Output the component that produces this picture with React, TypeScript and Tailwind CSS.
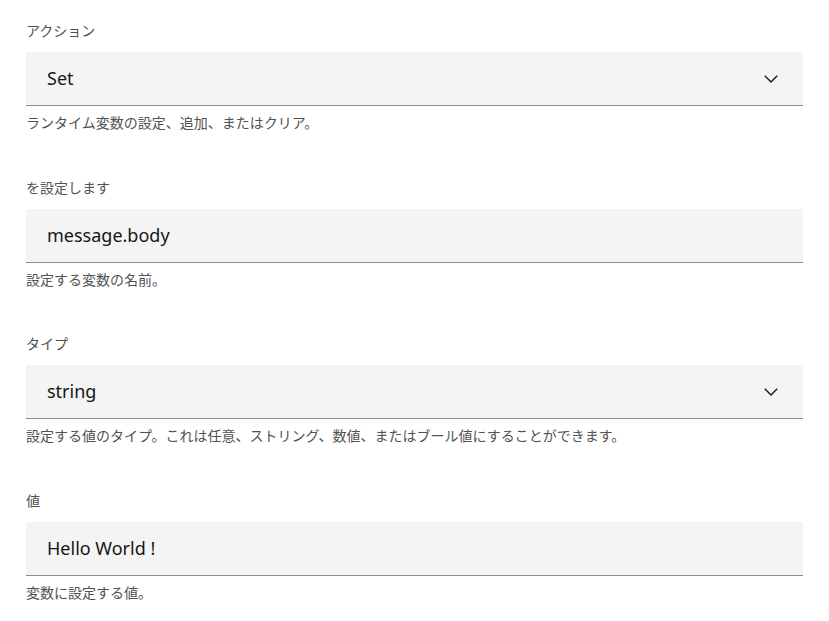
import React from "react";

type Field = {
  label: string;
  value: string;
  helper: string;
  select?: boolean;
};

const fields: Field[] = [
  { label: "アクション", value: "Set", helper: "ランタイム変数の設定、追加、またはクリア。", select: true },
  { label: "を設定します", value: "message.body", helper: "設定する変数の名前。" },
  {
    label: "タイプ",
    value: "string",
    helper: "設定する値のタイプ。これは任意、ストリング、数値、またはブール値にすることができます。",
    select: true,
  },
  { label: "値", value: "Hello World !", helper: "変数に設定する値。" },
];

function Chevron() {
  return (
    <svg width="14" height="8" viewBox="0 0 14 8" fill="none" className="shrink-0">
      <path d="M0.8 0.8 L7 7 L13.2 0.8" stroke="#161616" strokeWidth="1.4" />
    </svg>
  );
}

function FormField({ field }: { field: Field }) {
  return (
    <div className="flex flex-col">
      <label className="text-[14px] leading-[20px] text-[#525252]">{field.label}</label>
      <div className="mt-[11px] h-[54px] bg-[#f4f4f4] border-b border-[#8d8d8d] flex items-center pl-[21px] pr-[25px]">
        <span className="flex-1 text-[18px] text-[#161616]">{field.value}</span>
        {field.select && <Chevron />}
      </div>
      <p className="mt-[7px] text-[14px] leading-[20px] text-[#525252]">{field.helper}</p>
    </div>
  );
}

export default function App() {
  return (
    <div
      className="min-h-screen bg-white px-[26px] pt-[21px] flex flex-col gap-[44.6px]"
      style={{ fontFamily: '"Noto Sans", "Noto Sans CJK JP", sans-serif' }}
    >
      {fields.map((f) => (
        <FormField key={f.label} field={f} />
      ))}
    </div>
  );
}
